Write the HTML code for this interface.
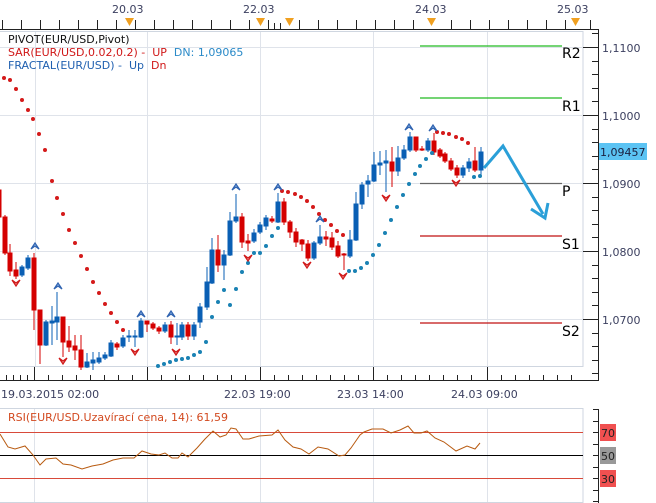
<!DOCTYPE html>
<html><head><meta charset="utf-8"><style>
html,body{margin:0;padding:0;background:#fff;}
svg{display:block;font-family:"DejaVu Sans","Liberation Sans",sans-serif;}
</style></head><body>
<svg width="656" height="503" viewBox="0 0 656 503" xmlns="http://www.w3.org/2000/svg">
<rect width="656" height="503" fill="#fff"/>
<!-- top axis -->
<g fill="#3c4060" font-size="11">
<text x="112" y="13">20.03</text><text x="243" y="13">22.03</text><text x="415" y="13">24.03</text><text x="557" y="13">25.03</text>
</g>
<line x1="0" y1="29.5" x2="598" y2="29.5" stroke="#222" stroke-width="1"/>
<g stroke="#222" stroke-width="1">
<path d="M2.5 20v9M21.5 20v9M40.5 20v9M59.5 20v9M78.5 20v9M97.5 20v9M116.5 20v9M135.5 20v9M154.5 20v9M173.5 20v9M192.5 20v9M211.5 20v9M230.5 20v9M249.5 20v9M268.5 20v9M274.5 23v6M280.5 23v6M299.5 20v9M318.5 20v9M337.5 20v9M356.5 20v9M375.5 20v9M394.5 20v9M413.5 20v9M451.5 20v9M470.5 20v9M489.5 20v9M508.5 20v9M527.5 20v9M546.5 20v9M565.5 20v9M590.5 20v9"/>
</g>
<g fill="#f0a020">
<path d="M125 18h9l-4.5 8z"/><path d="M256 18h9l-4.5 8z"/><path d="M285 18h9l-4.5 8z"/><path d="M427 18h9l-4.5 8z"/><path d="M571 18h9l-4.5 8z"/>
</g>
<!-- main box -->
<rect x="-1" y="31.5" width="584" height="335" fill="#fff" stroke="#cfd6e0"/>
<g stroke="#dfe3ea" stroke-width="1">
<path d="M0 47.5H583M0 115.5H583M0 183.5H583M0 251.5H583M0 319.5H583"/>
<path d="M35.5 32V366M147.5 32V366M260.5 32V366M373.5 32V366M487.5 32V366"/>
</g>
<!-- pivot lines -->
<g stroke-width="1.2">
<line x1="420" y1="46" x2="562" y2="46" stroke="#22bb22"/>
<line x1="420" y1="98" x2="562" y2="98" stroke="#22bb22"/>
<line x1="420" y1="183.5" x2="562" y2="183.5" stroke="#666"/>
<line x1="420" y1="236" x2="562" y2="236" stroke="#c01010"/>
<line x1="420" y1="323" x2="562" y2="323" stroke="#c01010"/>
</g>
<g font-size="14" fill="#000"><text x="562" y="58">R2</text><text x="562" y="111">R1</text><text x="562" y="196">P</text><text x="562" y="249">S1</text><text x="562" y="336">S2</text></g>
<!-- legend -->
<g font-size="11"><text x="8" y="43" fill="#111">PIVOT(EUR/USD,Pivot)</text>
<text x="8" y="56" fill="#d01818">SAR(EUR/USD,0.02,0.2) -&#160; UP&#160; <tspan fill="#2a8ac8">DN: 1,09065</tspan></text>
<text x="8" y="69" fill="#2060b0">FRACTAL(EUR/USD) -&#160; Up&#160; <tspan fill="#d01818">Dn</tspan></text></g>
<!-- candles -->
<g stroke-width="1">
<g stroke="#d40000" fill="#d40000">
<path d="M-1 185V217M5 215V255M10 244V276M16 262V279M34 253V330M40 310V364M63 317V357M69 326V352M75 335V360M81 335V370M117 342V350M147 321V332M153 322V330M159 326V334M171 321V344M188 322V340M218 235V272M242 213V248M248 234V251M272 216V223M284 198V225M290 220V238M296 228V247M302 239V251M308 240V261M326 231V246M332 232V250M338 241V258M344 253V270M392 147V187M416 137V152M422 146V151M434 133V155M440 148V158M445 152V163M451 158V171M457 165V178M475 147V172"/>
<rect x="-3" y="190" width="4" height="27"/><rect x="3" y="217" width="4" height="36"/><rect x="8" y="253" width="4" height="18"/><rect x="14" y="270" width="4" height="6"/><rect x="32" y="258" width="4" height="52"/><rect x="38" y="310" width="4" height="35"/><rect x="61" y="317" width="4" height="25"/><rect x="67" y="341" width="4" height="6"/><rect x="73" y="346" width="4" height="4"/><rect x="79" y="350" width="4" height="17"/><rect x="115" y="344" width="4" height="3"/><rect x="145" y="321" width="4" height="3"/><rect x="151" y="324" width="4" height="4"/><rect x="157" y="328" width="4" height="3"/><rect x="169" y="325" width="4" height="12"/><rect x="186" y="325" width="4" height="11"/><rect x="216" y="250" width="4" height="15"/><rect x="240" y="217" width="4" height="25"/><rect x="246" y="241" width="4" height="2"/><rect x="270" y="219" width="4" height="2"/><rect x="282" y="202" width="4" height="20"/><rect x="288" y="222" width="4" height="10"/><rect x="294" y="232" width="4" height="10"/><rect x="300" y="240" width="4" height="4"/><rect x="306" y="244" width="4" height="14"/><rect x="324" y="237" width="4" height="2"/><rect x="330" y="238" width="4" height="9"/><rect x="336" y="246" width="4" height="10"/><rect x="342" y="254" width="4" height="1"/><rect x="390" y="162" width="4" height="9"/><rect x="414" y="137" width="4" height="13"/><rect x="420" y="149" width="4" height="1"/><rect x="432" y="141" width="4" height="11"/><rect x="438" y="150" width="4" height="6"/><rect x="443" y="154" width="4" height="7"/><rect x="449" y="161" width="4" height="8"/><rect x="455" y="168" width="4" height="7"/><rect x="473" y="161" width="4" height="9"/>
</g>
<g stroke="#0a5fb4" fill="#0a5fb4">
<path d="M22 265V277M28 255V270M46 320V346M52 306V345M57 292V340M87 353V368M93 352V370M99 352V364M105 352V360M111 340V357M123 335V348M129 330V342M135 330V347M141 318V338M165 322V333M177 323V345M182 322V340M194 322V340M200 303V328M207 267V310M212 238V284M224 250V280M230 212V256M236 194V223M254 229V243M260 222V234M266 215V230M278 193V223M314 241V260M320 225V245M350 230V258M356 192V241M362 182V209M368 175V197M374 152V182M380 151V175M386 150V192M398 146V176M404 145V160M410 132V152M428 138V152M463 165V178M469 158V172M481 147V177"/>
<rect x="20" y="267" width="4" height="8"/><rect x="26" y="258" width="4" height="10"/><rect x="44" y="322" width="4" height="23"/><rect x="50" y="321" width="4" height="2"/><rect x="55" y="317" width="4" height="5"/><rect x="85" y="362" width="4" height="5"/><rect x="91" y="360" width="4" height="3"/><rect x="97" y="358" width="4" height="4"/><rect x="103" y="355" width="4" height="3"/><rect x="109" y="343" width="4" height="13"/><rect x="121" y="338" width="4" height="8"/><rect x="127" y="336" width="4" height="1"/><rect x="133" y="336" width="4" height="1"/><rect x="139" y="321" width="4" height="16"/><rect x="163" y="325" width="4" height="6"/><rect x="175" y="336" width="4" height="1"/><rect x="180" y="325" width="4" height="12"/><rect x="192" y="325" width="4" height="11"/><rect x="198" y="307" width="4" height="15"/><rect x="205" y="282" width="4" height="25"/><rect x="210" y="250" width="4" height="33"/><rect x="222" y="255" width="4" height="10"/><rect x="228" y="221" width="4" height="34"/><rect x="234" y="217" width="4" height="4"/><rect x="252" y="233" width="4" height="8"/><rect x="258" y="225" width="4" height="7"/><rect x="264" y="218" width="4" height="8"/><rect x="276" y="202" width="4" height="20"/><rect x="312" y="243" width="4" height="15"/><rect x="318" y="237" width="4" height="6"/><rect x="348" y="240" width="4" height="16"/><rect x="354" y="204" width="4" height="36"/><rect x="360" y="185" width="4" height="19"/><rect x="366" y="181" width="4" height="3"/><rect x="372" y="165" width="4" height="16"/><rect x="378" y="163" width="4" height="2"/><rect x="384" y="161" width="4" height="2"/><rect x="396" y="158" width="4" height="13"/><rect x="402" y="150" width="4" height="8"/><rect x="408" y="137" width="4" height="13"/><rect x="426" y="141" width="4" height="9"/><rect x="461" y="168" width="4" height="7"/><rect x="467" y="162" width="4" height="6"/><rect x="479" y="152" width="4" height="18"/>
</g>
</g>
<!-- SAR dots -->
<g fill="#d41a1a">
<circle cx="4" cy="78" r="2"/><circle cx="10" cy="80" r="2"/><circle cx="16" cy="89" r="2"/><circle cx="22" cy="100" r="2"/><circle cx="28" cy="110" r="2"/><circle cx="33" cy="119" r="2"/><circle cx="39" cy="134" r="2"/><circle cx="45" cy="150" r="2"/><circle cx="52" cy="181" r="2"/><circle cx="57" cy="198" r="2"/><circle cx="63" cy="214" r="2"/><circle cx="69" cy="230" r="2"/><circle cx="75" cy="243" r="2"/><circle cx="81" cy="256" r="2"/><circle cx="87" cy="269" r="2"/><circle cx="93" cy="282" r="2"/><circle cx="99" cy="293" r="2"/><circle cx="105" cy="304" r="2"/><circle cx="111" cy="313" r="2"/><circle cx="117" cy="322" r="2"/><circle cx="123" cy="330" r="2"/>
<circle cx="282" cy="191" r="2"/><circle cx="288" cy="192" r="2"/><circle cx="295" cy="194" r="2"/><circle cx="301" cy="197" r="2"/><circle cx="307" cy="201" r="2"/><circle cx="313" cy="207" r="2"/><circle cx="319" cy="214" r="2"/><circle cx="325" cy="220" r="2"/><circle cx="331" cy="225" r="2"/><circle cx="337" cy="231" r="2"/><circle cx="343" cy="235" r="2"/>
<circle cx="437" cy="132" r="2"/><circle cx="443" cy="133" r="2"/><circle cx="449" cy="134" r="2"/><circle cx="456" cy="137" r="2"/><circle cx="462" cy="139" r="2"/><circle cx="468" cy="143" r="2"/>
</g>
<g fill="#1a82b4">
<circle cx="158" cy="366" r="2"/><circle cx="164" cy="364" r="2"/><circle cx="170" cy="362" r="2"/><circle cx="176" cy="360" r="2"/><circle cx="182" cy="359" r="2"/><circle cx="188" cy="358" r="2"/><circle cx="194" cy="355" r="2"/><circle cx="200" cy="352" r="2"/><circle cx="206" cy="342" r="2"/><circle cx="212" cy="317" r="2"/><circle cx="218" cy="302" r="2"/><circle cx="224" cy="290" r="2"/><circle cx="230" cy="305" r="2"/><circle cx="236" cy="289" r="2"/><circle cx="242" cy="272" r="2"/><circle cx="248" cy="263" r="2"/><circle cx="254" cy="253" r="2"/><circle cx="260" cy="253" r="2"/><circle cx="266" cy="246" r="2"/><circle cx="272" cy="236" r="2"/><circle cx="278" cy="228" r="2"/>
<circle cx="349" cy="271" r="2"/><circle cx="355" cy="271" r="2"/><circle cx="361" cy="268" r="2"/><circle cx="367" cy="263" r="2"/><circle cx="373" cy="255" r="2"/><circle cx="379" cy="245" r="2"/><circle cx="385" cy="233" r="2"/><circle cx="391" cy="220" r="2"/><circle cx="397" cy="207" r="2"/><circle cx="403" cy="195" r="2"/><circle cx="409" cy="184" r="2"/><circle cx="415" cy="174" r="2"/><circle cx="420" cy="166" r="2"/><circle cx="426" cy="159" r="2"/><circle cx="432" cy="153" r="2"/><circle cx="474" cy="177" r="2"/><circle cx="480" cy="176" r="2"/>
</g>
<!-- fractals -->
<g fill="#9ec4ec" stroke="#2e62b0" stroke-width="1.2">
<path d="M31 249l4-6 4 6-4-3z"/><path d="M54 289l4-6 4 6-4-3z"/><path d="M137 317l4-6 4 6-4-3z"/><path d="M167 317l4-6 4 6-4-3z"/><path d="M232 190l4-6 4 6-4-3z"/><path d="M274 190l4-6 4 6-4-3z"/><path d="M316 222l4-6 4 6-4-3z"/><path d="M405 130l4-6 4 6-4-3z"/><path d="M429 131l4-6 4 6-4-3z"/>
</g>
<g fill="#f0a0a0" stroke="#d01818" stroke-width="1.2">
<path d="M12 280l4 6 4-6-4 3z"/><path d="M59 358l4 6 4-6-4 3z"/><path d="M131 349l4 6 4-6-4 3z"/><path d="M172 349l4 6 4-6-4 3z"/><path d="M244 255l4 6 4-6-4 3z"/><path d="M303 262l4 6 4-6-4 3z"/><path d="M339 273l4 6 4-6-4 3z"/><path d="M382 195l4 6 4-6-4 3z"/><path d="M452 180l4 6 4-6-4 3z"/>
</g>
<!-- blue arrow -->
<g stroke="#2a9fd8" stroke-width="3" fill="none" stroke-linejoin="miter">
<path d="M484 168L503 146L543 214"/><path d="M531 209L545 218L548 203"/>
</g>
<!-- right axis -->
<line x1="598.5" y1="29" x2="598.5" y2="381" stroke="#222"/>
<g stroke="#222">
<path d="M583 47.5h15M583 115.5h15M583 183.5h15M583 251.5h15M583 319.5h15"/>
<path d="M592 33.5h6M592 61.5h6M592 74.5h6M592 88.5h6M592 101.5h6M592 129.5h6M592 142.5h6M592 156.5h6M592 169.5h6M592 197.5h6M592 210.5h6M592 224.5h6M592 237.5h6M592 265.5h6M592 278.5h6M592 292.5h6M592 305.5h6M592 333.5h6M592 346.5h6M592 360.5h6M592 373.5h6"/>
</g>
<g font-size="11" fill="#3c4060"><text x="602" y="52">1,1100</text><text x="602" y="120">1,1000</text><text x="602" y="188">1,0900</text><text x="602" y="256">1,0800</text><text x="602" y="324">1,0700</text></g>
<rect x="599" y="143" width="48" height="17" fill="#5bc3f3"/>
<text x="600" y="156" font-size="11" fill="#1a2040">1,09457</text>
<!-- bottom axis -->
<line x1="0" y1="380.5" x2="598" y2="380.5" stroke="#222"/>
<g stroke="#222">
<path d="M34.5 367v13M147.5 367v13M260.5 367v13M373.5 367v13M487.5 367v13"/>
<path d="M6.5 375v5M13.5 375v5M20.5 375v5M27.5 375v5M48.5 375v5M62.5 375v5M76.5 375v5M90.5 375v5M104.5 375v5M118.5 375v5M132.5 375v5M161.5 375v5M175.5 375v5M189.5 375v5M203.5 375v5M217.5 375v5M231.5 375v5M245.5 375v5M274.5 375v5M288.5 375v5M302.5 375v5M316.5 375v5M330.5 375v5M344.5 375v5M358.5 375v5M387.5 375v5M401.5 375v5M415.5 375v5M429.5 375v5M443.5 375v5M457.5 375v5M471.5 375v5M501.5 375v5M515.5 375v5M529.5 375v5M543.5 375v5M557.5 375v5M571.5 375v5"/>
</g>
<g font-size="11" fill="#3c4060"><text x="1" y="398">19.03.2015 02:00</text><text x="224" y="398">22.03 19:00</text><text x="337" y="398">23.03 14:00</text><text x="451" y="398">24.03 09:00</text></g>
<!-- RSI panel -->
<rect x="-1" y="408.5" width="584" height="94" fill="#fff" stroke="#cfd6e0"/>
<g stroke="#dfe3ea"><path d="M34.5 409V502M147.5 409V502M260.5 409V502M373.5 409V502M487.5 409V502"/></g>
<line x1="0" y1="432.5" x2="583" y2="432.5" stroke="#d84a3a"/>
<line x1="0" y1="455.5" x2="583" y2="455.5" stroke="#000"/>
<line x1="0" y1="478.5" x2="583" y2="478.5" stroke="#d84a3a"/>
<text x="8" y="421" font-size="11" fill="#d2491f">RSI(EUR/USD.Uzavírací cena, 14): 61,59</text>
<polyline fill="none" stroke="#b85a10" stroke-width="1" points="0,434 8,447 15,449 25,446 33,455 40,465 46,459 56,458 63,464 71,465 82,469 92,466 103,464 113,460 123,458 134,458 142,451 151,454 159,455 165,453 172,458 178,458 182,453 188,457 197,448 205,439 213,431 220,437 226,435 231,428 236,429 243,439 249,439 259,436 272,435 278,430 285,440 293,447 301,449 309,454 318,447 328,449 339,456 345,455 351,448 360,435 364,432 372,429 383,429 391,433 400,430 408,426 414,433 421,433 427,431 435,438 444,442 456,451 467,446 475,449 480,443"/>
<line x1="598.5" y1="409" x2="598.5" y2="503" stroke="#222"/>
<g stroke="#222"><path d="M593 409.5h5M593 421.5h5M593 432.5h5M593 444.5h5M593 455.5h5M593 467.5h5M593 478.5h5M593 490.5h5M593 501.5h5"/></g>
<rect x="600" y="424" width="16" height="17" fill="#f05050"/><text x="601" y="437" font-size="11" fill="#222">70</text>
<rect x="600" y="447" width="16" height="17" fill="#999"/><text x="601" y="460" font-size="11" fill="#222">50</text>
<rect x="600" y="470" width="16" height="17" fill="#f05050"/><text x="601" y="483" font-size="11" fill="#222">30</text>
</svg>
</body></html>
